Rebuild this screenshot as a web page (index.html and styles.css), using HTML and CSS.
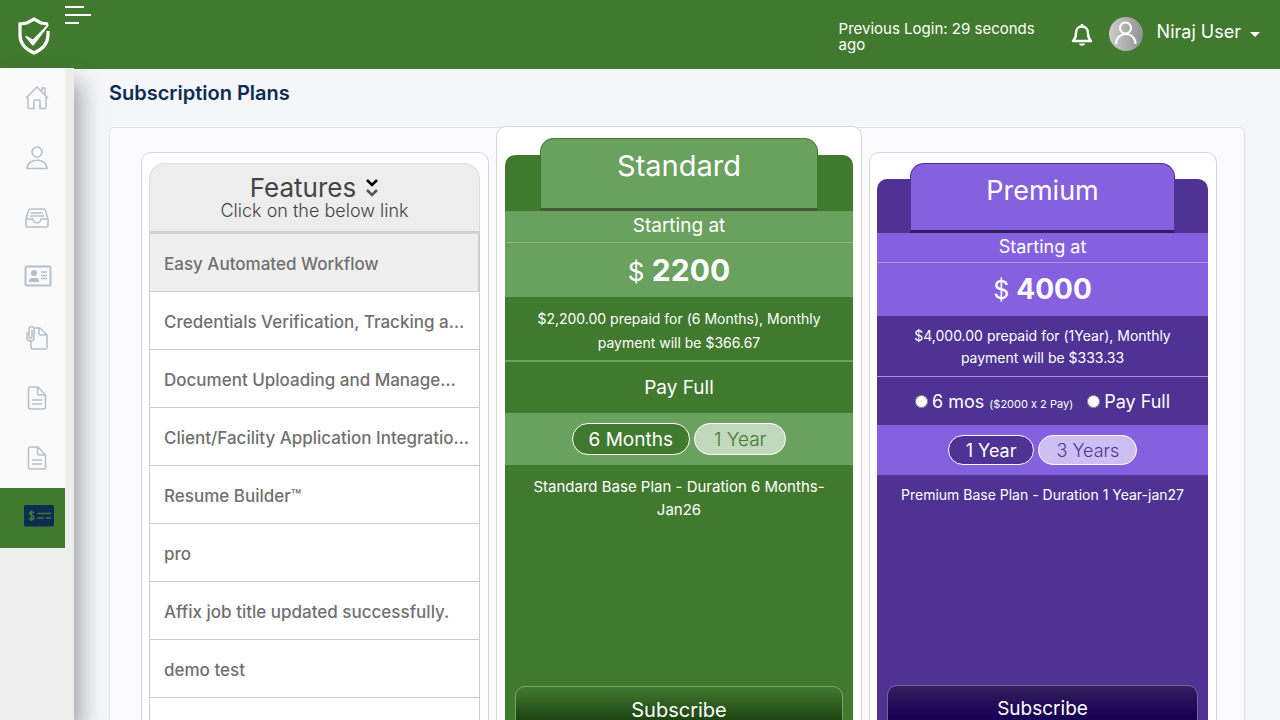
FILE: index.html
```html
<!DOCTYPE html>
<html lang="en">
<head>
<meta charset="utf-8">
<meta name="viewport" content="width=device-width, initial-scale=1">
<title>Subscription Plans</title>
<link rel="stylesheet" href="styles.css">
</head>
<body>
<div class="app">
  <header class="topbar">
    <a class="logo" href="#" aria-label="Home">
      <svg width="34" height="40" viewBox="0 0 34 40" fill="none" stroke="#fff" stroke-width="3.2"><path d="M31 8 24 7 17 3 10 7 3 8v11c0 9 5 14 14 18 9-4 14-9 14-18v-4"/><path d="M9 20.500 16 29 31 9 16 24.500z" fill="#fff" stroke-width="1.500" stroke-linejoin="round"/></svg>
    </a>
    <button class="menu" type="button" aria-label="Toggle menu"><span class="bar mid"></span><span class="bar long"></span><span class="bar short"></span></button>
    <p class="last-login">Previous Login: 29 seconds ago</p>
    <button class="bell" type="button" aria-label="Notifications">
      <svg width="22" height="24" viewBox="0 0 22 24" fill="none" stroke="#fff" stroke-width="2.4"><path d="M11 3.500c-4 0-6 3-6 6.500 0 4-1 6-3 8h18c-2-2-3-4-3-8 0-3.500-2-6.500-6-6.500z" stroke-linejoin="round"/><path d="M11 1v2.500"/><path d="M8 20.500h6c-.5 3-5.500 3-6 0z" fill="#fff" stroke="none"/></svg>
    </button>
    <button class="user" type="button">
      <svg width="34" height="34" viewBox="0 0 34 34"><defs><linearGradient id="av"><stop stop-color="#cdcdcd"/><stop offset="1" stop-color="#919191"/></linearGradient></defs><circle cx="17" cy="17" r="17" fill="url(#av)"/><g fill="none" stroke="#fff" stroke-width="2"><circle cx="16.500" cy="11" r="5.500"/><path d="M7 27c0-13.500 19.500-13.500 19.500 0"/></g></svg>
      <span>Niraj User</span><i class="caret"></i>
    </button>
  </header>

  <div class="body">
    <nav class="sidebar" aria-label="Main">
      <a href="#" aria-label="Home"><svg width="26" height="26" viewBox="0 0 26 26"><path d="M2 13 13 2l11 11M4 12v10.500q0 1 1 1h5V16q0-1 1-1h4q1 0 1 1v7.500h5q1 0 1-1V12M18 6V3h3v6"/></svg></a>
      <a href="#" aria-label="Profile"><svg width="26" height="26" viewBox="0 0 26 26"><circle cx="13" cy="7" r="5"/><path d="M3 23.500c0-11 20-11 20 0z"/></svg></a>
      <a href="#" aria-label="Inbox"><svg width="26" height="26" viewBox="0 0 26 26"><path d="M2 14 4.500 5.500Q5 4 6.500 4h13Q21 4 21.500 5.500L24 14v6.500q0 1.500-1.500 1.500h-19Q2 22 2 20.500zh7c.5 5 7.500 5 8 0h7M7 8h12M6 11h14"/></svg></a>
      <a href="#" aria-label="Credentials"><svg class="wide" width="28" height="24" viewBox="0 0 28 24"><rect x="1.500" y="1.500" width="25" height="19" rx="1.500" stroke-width="2"/><g fill="#b4c0ca" stroke="none"><circle cx="10" cy="8" r="3"/><path d="M5 17v-1q0-3 3-3h4q3 0 3 3v1z"/></g><path d="M17 7h6M17 10.500h6M17 13.500h6"/></svg></a>
      <a href="#" aria-label="Attachments"><svg width="26" height="26" viewBox="0 0 26 26"><path d="M10 3h6l7 7v12q0 2-2 2H9q-2 0-2-2v-7M15 3v5q0 2 2 2h6M3 7v6c0 4 7 4 7 0V4c0-3.500-5-3.500-5 0v8c0 2 3 2 3 0V5"/></svg></a>
      <a href="#" aria-label="Documents"><svg width="26" height="26" viewBox="0 0 26 26"><path d="M14 2H6Q4.500 2 4.500 4v18q0 2 2 2h13q2 0 2-2V10zM13.500 2v6q0 2 2 2h6M8 15h10M8 19h10"/></svg></a>
      <a href="#" aria-label="Reports"><svg width="26" height="26" viewBox="0 0 26 26"><path d="M14 2H6Q4.500 2 4.500 4v18q0 2 2 2h13q2 0 2-2V10zM13.500 2v6q0 2 2 2h6M8 15h10M8 19h10"/></svg></a>
      <a class="active" href="#" aria-label="Subscription" aria-current="page"><svg class="wide" width="30" height="24" viewBox="0 0 30 24"><rect width="30" height="21.500" rx="1.500" fill="#0d2c52" stroke="none"/><path d="M10 8C9 6.500 5.500 6.500 5.500 8.500s4.500 1.500 4.500 4S6 14.500 5 13M7.500 5.500v10.500M13.500 8.500H27M13.500 13h6M22 13h5" stroke="#417a2f"/></svg></a>
    </nav>

    <main class="main">
      <h1>Subscription Plans</h1>
      <section class="plans">
        <article class="card features">
          <div class="features-head">
            <h2>Features <svg width="14" height="20" viewBox="0 0 14 20" fill="none" stroke-width="2.500"><path d="m2 2 5 5 5-5" stroke="#000"/><path d="m2 12 5 5 5-5" stroke="#555"/></svg></h2>
            <p>Click on the below link</p>
          </div>
          <ul>
            <li><a class="selected" href="#">Easy Automated Workflow</a></li>
            <li><a href="#">Credentials Verification, Tracking a…</a></li>
            <li><a href="#">Document Uploading and Manage…</a></li>
            <li><a href="#">Client/Facility Application Integratio…</a></li>
            <li><a href="#">Resume Builder™</a></li>
            <li><a href="#">pro</a></li>
            <li><a href="#">Affix job title updated successfully.</a></li>
            <li><a href="#">demo test</a></li>
            <li class="blank"></li>
          </ul>
        </article>

        <article class="card plan standard">
          <div class="plan-body">
            <h2 class="tab">Standard</h2>
            <p class="starting">Starting at</p>
            <p class="price">$ <b>2200</b></p>
            <p class="prepaid">$2,200.00 prepaid for (6 Months), Monthly payment will be $366.67</p>
            <div class="pay">Pay Full</div>
            <div class="terms"><button class="pill on" type="button">6 Months</button><button class="pill" type="button">1 Year</button></div>
            <p class="about">Standard Base Plan - Duration 6 Months-Jan26</p>
            <button class="subscribe" type="button">Subscribe</button>
          </div>
        </article>

        <article class="card plan premium">
          <div class="plan-body">
            <h2 class="tab">Premium</h2>
            <p class="starting">Starting at</p>
            <p class="price">$ <b>4000</b></p>
            <p class="prepaid">$4,000.00 prepaid for (1Year), Monthly payment will be $333.33</p>
            <div class="pay">
              <label><input type="radio" name="pay"><span>6 mos <small>($2000 x 2 Pay)</small></span></label>
              <label><input type="radio" name="pay"><span>Pay Full</span></label>
            </div>
            <div class="terms"><button class="pill on" type="button">1 Year</button><button class="pill" type="button">3 Years</button></div>
            <p class="about">Premium Base Plan - Duration 1 Year-jan27</p>
            <button class="subscribe" type="button">Subscribe</button>
          </div>
        </article>
      </section>
    </main>
  </div>
</div>
</body>
</html>
```
FILE: styles.css
```css
* { box-sizing: border-box; }
body { margin: 0; background: #f4f6fa; font-family: Inter, "Open Sans", sans-serif; font-variant-ligatures: no-contextual; color: #444; }
h1, h2, p, ul { margin: 0; padding: 0; font-weight: 400; }
ul { list-style: none; }
a { color: inherit; text-decoration: none; }
button { font: inherit; color: inherit; background: none; border: 0; padding: 0; cursor: pointer; }
svg { display: block; flex: none; }

.app { display: flex; flex-direction: column; height: 100vh; overflow: hidden; }
.topbar { display: flex; flex: none; align-items: flex-start; height: 69px; padding-right: 20px; background: #417a2f; color: #fff; }
.logo { padding: 16px 14px 0 17px; }
.menu { display: flex; flex-direction: column; gap: 6px; padding-top: 6px; margin-right: auto; }
.bar { height: 2px; background: #fff; }
.bar.mid { width: 19px; }
.bar.long { width: 26px; }
.bar.short { width: 14px; }
.last-login { width: 200px; margin: 21px 32px 0 0; font-size: 15px; line-height: 16px; }
.bell { padding-top: 23px; margin-right: 16px; }
.user { display: flex; align-items: center; gap: 14px; padding-top: 17px; font-size: 18px; line-height: 30px; }
.user span { padding-bottom: 4px; }
.caret { border: 5px solid transparent; border-top-color: #fff; border-bottom: 0; margin-left: -5px; }

.body { display: flex; flex: 1; min-height: 0; }
.sidebar { position: relative; flex: none; width: 74px; margin-top: -1px; padding-right: 9px; background: #ededed; box-shadow: 6px 14px 22px rgba(0, 0, 0, .36); }
.sidebar a { display: flex; align-items: center; height: 60px; padding-left: 24px; background: #fafafa; }
.sidebar a.active { background: #417a2f; }
.sidebar svg { fill: none; stroke: #b4c0ca; stroke-width: 1.5; }
.sidebar .wide { margin-bottom: 2px; }

.main { flex: 1; min-width: 0; padding: 11px 35px 0; overflow: hidden; }
h1 { font-size: 20px; line-height: 26px; font-weight: 600; color: #0b2c50; }
.plans { display: grid; grid-template-columns: repeat(3, minmax(0, 1fr)); gap: 16px; min-height: 700px; margin-top: 21px; padding: 24px 27px 30px 31px; border: 1px solid #dfe1e4; border-radius: 5px; background: #fbfbfd; }
.card { padding: 10px 8px 10px 7px; border: 1px solid #d5d6d9; border-radius: 10px; background: #fff; }

.features-head { height: 71px; padding-top: 12px; border: 1px solid #ddd; border-bottom: 3px solid #d2d2d2; border-radius: 16px 16px 0 0; background: #ededed; text-align: center; }
.features-head h2 { display: flex; justify-content: center; align-items: center; gap: 9px; font-size: 26px; line-height: 24px; }
.features-head p { font-size: 18px; line-height: 22px; font-weight: 300; }
.features li { height: 58px; border: 1px solid #ccc; border-top: 0; }
.features li a { display: block; height: 57px; padding: 2px 14px 0; overflow: hidden; white-space: nowrap; font-size: 17px; line-height: 56px; font-weight: 500; color: #707070; }
.features li .selected { background: #efefef; border-right: 1px solid #ccc; }

.plan-body { display: flex; flex-direction: column; min-height: 580px; margin-top: 16px; border-radius: 10px 10px 0 0; background: var(--dark); color: #fff; text-align: center; }
.standard { --dark: #417a2f; --light: #6ba15f; --line: #8bb581; --edge: #3d5c35; --faded: #c2d8bd; margin: -26px -9px 0 -9px; }
.premium { --dark: #4e3394; --light: #8561e0; --line: #a78ee6; --edge: #302060; --faded: #cebff2; }
.tab { width: 80%; height: 70px; margin: -16px auto 0; padding-top: 12px; border: 1px solid var(--dark); border-bottom: 3px solid var(--edge); border-radius: 14px 14px 0 0; background: var(--light); font-size: 27px; line-height: 30px; }
.starting { height: 30px; border-bottom: 1px solid var(--line); background: var(--light); font-size: 18px; line-height: 27px; }
.price { height: 53px; background: var(--light); font-size: 25px; line-height: 53px; }
.price b { font-size: 28px; font-weight: 700; }
.prepaid { padding: 9px 30px 7px; border-bottom: 1px solid var(--line); font-size: 14px; line-height: 22px; }
.pay { display: flex; justify-content: center; align-items: center; gap: 14px; height: 48px; font-size: 18px; }
.pay label { display: flex; align-items: center; gap: 4px; }
.pay input { width: 13px; height: 13px; margin: 0; }
.pay small { font-size: 11px; }
.terms { display: flex; justify-content: center; align-items: center; gap: 4px; height: 50px; background: var(--light); }
.pill { height: 30px; padding: 0 17px; border: 1px solid #fff; border-radius: 16px; background: var(--faded); color: var(--dark); font-size: 18px; font-weight: 300; }
.pill.on { background: var(--dark); color: #fff; font-weight: 400; }
.about { height: 200px; padding: 9px 20px 0; font-size: 14px; line-height: 22px; }
.subscribe { height: 46px; margin: 10px 10px 0; border: 1px solid #74668f; border-radius: 10px; background: linear-gradient(#33205f, #180055 70%); font-size: 19px; }

.standard { padding: 11px 8px; }
.standard .plan-body { margin-top: 17px; }
.standard .tab { height: 73px; margin-top: -17px; font-size: 29px; }
.standard .starting { height: 32px; font-size: 19px; line-height: 29px; }
.standard .price { height: 54px; font-size: 26px; line-height: 54px; }
.standard .price b { font-size: 30px; }
.standard .prepaid { padding: 10px 30px 5px; border-width: 2px; border-color: var(--light); font-size: 14px; line-height: 24px; }
.standard .pay { height: 51px; font-size: 19px; }
.standard .terms { height: 52px; }
.standard .pill { height: 32px; padding: 0 19px; font-size: 19px; }
.standard .pill.on { padding: 0 16px; }
.standard .about { height: 211px; padding-top: 10px; font-size: 15px; line-height: 23px; }
.standard .subscribe { height: 48px; border-color: #79a36c; background: linear-gradient(#417a2f, #1d4513 70%); font-size: 20px; }
```
